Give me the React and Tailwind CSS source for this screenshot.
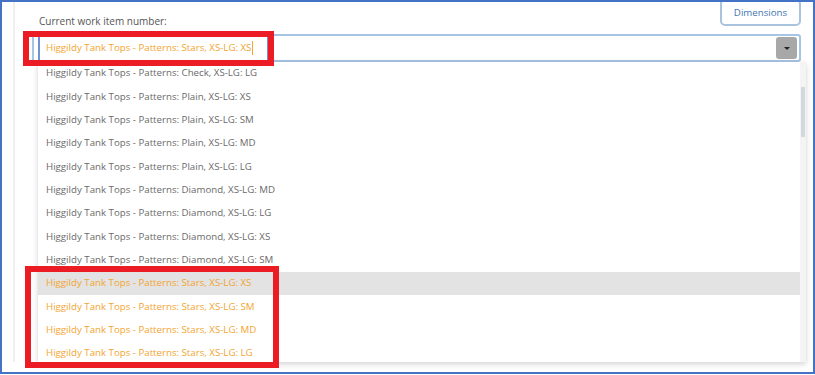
const items = [
  { label: "Higgildy Tank Tops - Patterns: Check, XS-LG: LG" },
  { label: "Higgildy Tank Tops - Patterns: Plain, XS-LG: XS" },
  { label: "Higgildy Tank Tops - Patterns: Plain, XS-LG: SM" },
  { label: "Higgildy Tank Tops - Patterns: Plain, XS-LG: MD" },
  { label: "Higgildy Tank Tops - Patterns: Plain, XS-LG: LG" },
  { label: "Higgildy Tank Tops - Patterns: Diamond, XS-LG: MD" },
  { label: "Higgildy Tank Tops - Patterns: Diamond, XS-LG: LG" },
  { label: "Higgildy Tank Tops - Patterns: Diamond, XS-LG: XS" },
  { label: "Higgildy Tank Tops - Patterns: Diamond, XS-LG: SM" },
  { label: "Higgildy Tank Tops - Patterns: Stars, XS-LG: XS", hit: true, active: true },
  { label: "Higgildy Tank Tops - Patterns: Stars, XS-LG: SM", hit: true },
  { label: "Higgildy Tank Tops - Patterns: Stars, XS-LG: MD", hit: true },
  { label: "Higgildy Tank Tops - Patterns: Stars, XS-LG: LG", hit: true },
]

export default function App() {
  return (
    <div className="w-[815px] h-[375px] bg-white relative overflow-hidden" style={{ fontFamily: '"Open Sans", "Noto Sans", sans-serif' }}>
      <div className="w-[815px] h-[374px] border-2 border-[#4472c4] overflow-hidden relative">
        <div className="ml-[11px] h-[360px] border-l-2 border-[#efefef] pl-[13px] pr-[12px]">
          <div className="flex justify-between items-start">
            <div className="pt-[12px] pl-[11px] text-[10px] text-[#555]">Current work item number:</div>
            <button className="-mt-[3px] w-[81px] h-[27px] border-2 border-[#a9c3df] rounded-[5px] text-[9.7px] text-[#3f75b0] pt-[2px]">
              Dimensions
            </button>
          </div>

          <div className="mt-[5px] ml-[4px] h-[28px] border-2 border-[#a6c4e3] rounded-[3px] flex items-center pr-[2px]">
            <div className="ml-[4px] h-[23px] w-[231px] border-x-2 border-[#6f92d6] flex items-center pl-[6px] text-[9.7px] text-[#f2a531]">
              Higgildy Tank Tops - Patterns: Stars, XS-LG: XS
              <span className="w-px h-[14px] bg-[#f2a531] ml-px"></span>
            </div>
            <div className="ml-auto w-[21px] h-[22px] rounded-[3px] bg-[#a8a8a8] flex items-center justify-center">
              <span className="w-0 h-0 border-x-[3px] border-x-transparent border-t-[3px] border-t-[#222]"></span>
            </div>
          </div>
        </div>

        {/* dropdown list */}
        <div className="absolute left-[36px] top-[60px] w-[768px] h-[300px] bg-white shadow-[0_2px_6px_rgba(0,0,0,0.18)] flex">
          <ul className="flex-1">
            {items.map((it) => (
              <li
                key={it.label}
                className={
                  "h-[23.33px] flex items-center pl-[8px] text-[9.7px] " +
                  (it.hit ? "text-[#f2a531] " : "text-[#6a6a6a] ") +
                  (it.active ? "bg-[#e3e3e3]" : "")
                }
              >
                {it.label}
              </li>
            ))}
          </ul>
          <div className="w-[6px] bg-[#f4f4f4] relative">
            <div className="absolute left-[1px] top-[25px] w-[4px] h-[50px] bg-[#d3d8df]"></div>
          </div>
        </div>

        {/* annotation boxes */}
        <div className="absolute left-[21px] top-[29px] w-[251px] h-[35px] border-[6px] border-[#ec1c24]"></div>
        <div className="absolute left-[23px] top-[264px] w-[254px] h-[102px] border-[6px] border-[#ec1c24]"></div>
      </div>
    </div>
  )
}
